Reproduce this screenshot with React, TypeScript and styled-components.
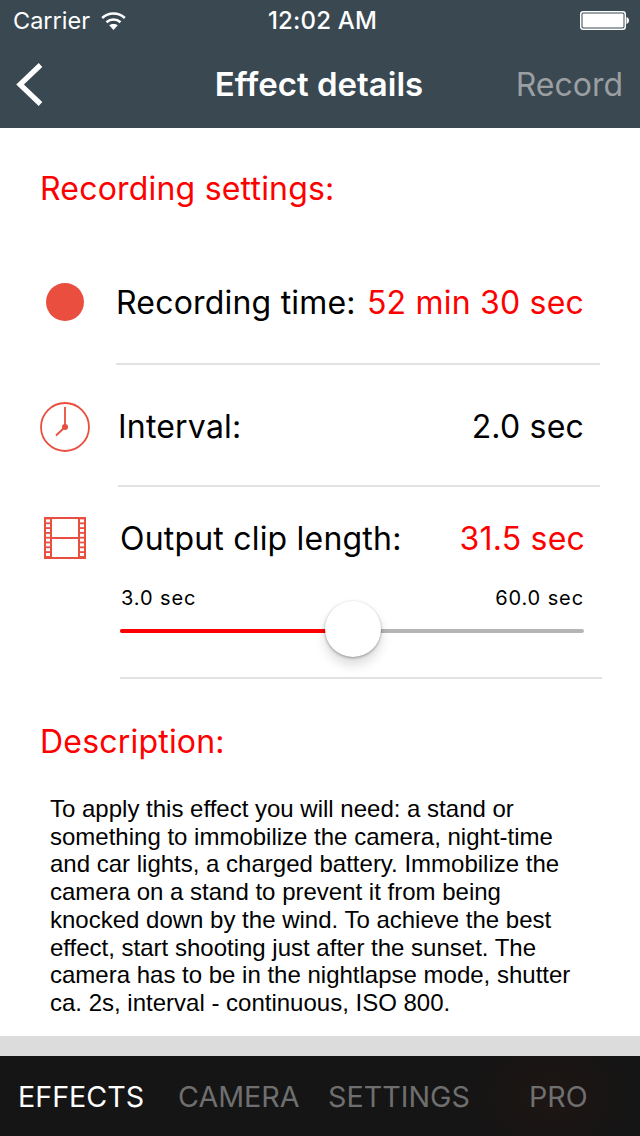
import React from 'react';
import styled, { createGlobalStyle } from 'styled-components';

const GlobalStyle = createGlobalStyle`
  html, body {
    margin: 0;
    padding: 0;
    background: #fff;
  }
`;

const Screen = styled.div`
  width: 640px;
  height: 1136px;
  display: flex;
  flex-direction: column;
  overflow: hidden;
  font-family: Inter, "Liberation Sans", sans-serif;
  color: #000;
`;

const Header = styled.header`
  height: 128px;
  flex: none;
  background: #394851;
  color: #fff;
`;

const StatusBar = styled.div`
  height: 40px;
  padding: 0 11px 0 13px;
  display: grid;
  grid-template-columns: 1fr auto 1fr;
  align-items: center;
  font-size: 23.5px;
  font-weight: 400;
`;

const StatusLeft = styled.div`
  display: flex;
  align-items: center;
  gap: 11px;
`;

const StatusTime = styled.div`
  margin-left: 3px;
  font-size: 24px;
  font-weight: 500;
  letter-spacing: 0.2px;
`;

const StatusRight = styled.div`
  display: flex;
  justify-content: flex-end;
`;

const NavBar = styled.div`
  height: 88px;
  padding: 0 17px 0 15px;
  display: grid;
  grid-template-columns: 1fr auto 1fr;
  align-items: center;
`;

const NavTitle = styled.div`
  font-size: 33px;
  font-weight: 600;
`;

const NavAction = styled.div`
  justify-self: end;
  font-size: 32px;
  font-weight: 400;
  color: #9b9fa2;
`;

const Content = styled.main`
  flex: 1;
  padding: 40px 40px 0 41px;
`;

const SectionTitle = styled.h2`
  margin: 0 0 0 -1px;
  height: 40px;
  font-size: 32px;
  line-height: 42px;
  font-weight: 400;
  letter-spacing: 0.2px;
  color: #fe0000;
`;

const Row = styled.div<{ $height: number; $inset: number; $shift?: number }>`
  height: ${(p) => p.$height}px;
  box-sizing: border-box;
  display: flex;
  align-items: flex-start;
  border-bottom: 2px solid #e2e2e2;
  margin-left: ${(p) => p.$inset}px;
  margin-right: ${(p) => p.$shift ?? 0}px;
  position: relative;
`;

const IconSlot = styled.div<{ $top: number; $size: number; $left: number }>`
  position: absolute;
  left: ${(p) => p.$left}px;
  top: ${(p) => p.$top}px;
  width: ${(p) => p.$size}px;
  height: ${(p) => p.$size}px;
`;

const RowBody = styled.div<{ $pad: number; $right: number }>`
  flex: 1;
  padding: ${(p) => p.$pad}px ${(p) => p.$right}px 0 0;
  min-width: 0;
`;

const RowLine = styled.div`
  display: flex;
  justify-content: space-between;
  height: 40px;
  font-size: 32px;
  line-height: 42px;
  letter-spacing: 0.2px;
  white-space: nowrap;
`;

const Value = styled.span<{ $accent?: boolean }>`
  margin-right: -1px;
  color: ${(p) => (p.$accent ? '#fe0000' : '#000')};
`;

const RangeLabels = styled.div`
  margin-top: 20px;
  padding-left: 1px;
  display: flex;
  justify-content: space-between;
  font-size: 20px;
  line-height: 40px;
  letter-spacing: 0.9px;
  height: 40px;
`;

const Track = styled.div`
  position: relative;
  height: 4px;
  margin-top: 11px;
  border-radius: 2px;
  background: #b5b5b5;
`;

const TrackFill = styled.div`
  height: 100%;
  border-radius: 2px 0 0 2px;
  background: #fe0000;
`;

const Thumb = styled.div`
  position: absolute;
  top: -28px;
  width: 56px;
  height: 56px;
  margin-left: -28px;
  border-radius: 50%;
  background: #fff;
  box-shadow: 0 1px 3px rgba(0, 0, 0, 0.35), 0 8px 12px rgba(0, 0, 0, 0.14);
`;

const DescriptionTitle = styled(SectionTitle)`
  margin-top: 42px;
`;

const Description = styled.p`
  margin: 34px 0 0 9px;
  width: 530px;
  font-family: "Liberation Sans", Arial, sans-serif;
  font-size: 24px;
  line-height: 27.7px;
`;

const Divider = styled.div`
  height: 20px;
  flex: none;
  background: #dcdcdc;
`;

const TabBar = styled.nav`
  height: 80px;
  flex: none;
  display: flex;
  align-items: center;
  background: radial-gradient(ellipse 90px 70px at 550px 40px, #1d1513, #151515);
  font-size: 28.7px;
`;

const Tab = styled.div<{ $active?: boolean; $width: number; $left: number }>`
  width: ${(p) => p.$width}px;
  padding-left: ${(p) => p.$left}px;
  box-sizing: border-box;
  color: ${(p) => (p.$active ? '#fff' : '#6f6f6f')};
  white-space: nowrap;
`;

const RecordDot = styled.div`
  width: 38px;
  height: 38px;
  border-radius: 50%;
  background: #e94e3f;
`;

const WifiIcon = () => (
  <svg width="25" height="19" viewBox="0 0 25 19" fill="none">
    <path d="M1.2 7C7.5 1 17.5 1 23.8 7" stroke="#fff" strokeWidth="2.6" />
    <path d="M5.5 11.2C9.5 7.6 15.5 7.6 19.5 11.2" stroke="#fff" strokeWidth="2.6" />
    <path d="M12.5 19L8.2 14.3C10.5 12.4 14.5 12.4 16.8 14.3Z" fill="#fff" />
  </svg>
);

const BatteryIcon = () => (
  <svg width="49" height="19" viewBox="0 0 49 19">
    <rect x="0.75" y="0.75" width="44.5" height="17.5" rx="2.5" fill="none" stroke="#fff" strokeWidth="1.5" />
    <rect x="2.5" y="2.5" width="41" height="14" rx="1" fill="#fff" />
    <path d="M46.5 6C48 6.3 49 7.8 49 9.5S48 12.7 46.5 13Z" fill="#fff" />
  </svg>
);

const BackIcon = () => (
  <svg width="30" height="44" viewBox="0 0 30 44" fill="none">
    <path d="M25.5 3L5 22.5L25.5 42" stroke="#fff" strokeWidth="5.2" />
  </svg>
);

const ClockIcon = () => (
  <svg width="50" height="50" viewBox="0 0 50 50" fill="none" stroke="#e94e3f">
    <circle cx="25" cy="25" r="24" strokeWidth="1.8" />
    <path d="M25 5V25L16 33.5" strokeWidth="1.8" />
    <circle cx="25" cy="25" r="3" fill="#e94e3f" stroke="none" />
  </svg>
);

const FilmIcon = () => {
  const holes = [0, 1, 2, 3, 4, 5, 6, 7];
  return (
    <svg width="42" height="42" viewBox="0 0 42 42">
      <path d="M0 0H42V42H0Z" fill="#e94e3f" />
      <rect x="8" y="2" width="26" height="18" fill="#fff" />
      <rect x="8" y="22" width="26" height="18" fill="#fff" />
      {holes.map((i) => (
        <React.Fragment key={i}>
          <rect x="2" y={2.4 + i * 4.8} width="4" height="3" fill="#fff" />
          <rect x="36" y={2.4 + i * 4.8} width="4" height="3" fill="#fff" />
        </React.Fragment>
      ))}
    </svg>
  );
};

export default function App() {
  return (
    <>
      <GlobalStyle />
      <Screen>
        <Header>
          <StatusBar>
            <StatusLeft>
              Carrier
              <WifiIcon />
            </StatusLeft>
            <StatusTime>12:02 AM</StatusTime>
            <StatusRight>
              <BatteryIcon />
            </StatusRight>
          </StatusBar>
          <NavBar>
            <BackIcon />
            <NavTitle>Effect details</NavTitle>
            <NavAction>Record</NavAction>
          </NavBar>
        </Header>

        <Content>
          <SectionTitle>Recording settings:</SectionTitle>

          <Row $height={157} $inset={75}>
            <IconSlot $left={-70} $top={75} $size={38}>
              <RecordDot />
            </IconSlot>
            <RowBody $pad={74} $right={17}>
              <RowLine>
                <span>Recording time:</span>
                <Value $accent>52 min 30 sec</Value>
              </RowLine>
            </RowBody>
          </Row>

          <Row $height={122} $inset={77}>
            <IconSlot $left={-78} $top={37} $size={50}>
              <ClockIcon />
            </IconSlot>
            <RowBody $pad={41} $right={17}>
              <RowLine>
                <span>Interval:</span>
                <Value>2.0 sec</Value>
              </RowLine>
            </RowBody>
          </Row>

          <Row $height={192} $inset={79} $shift={-2}>
            <IconSlot $left={-76} $top={30} $size={42}>
              <FilmIcon />
            </IconSlot>
            <RowBody $pad={31} $right={18}>
              <RowLine>
                <span>Output clip length:</span>
                <Value $accent>31.5 sec</Value>
              </RowLine>
              <RangeLabels>
                <span>3.0 sec</span>
                <span>60.0 sec</span>
              </RangeLabels>
              <Track>
                <TrackFill style={{ width: `${(233 / 464) * 100}%` }} />
                <Thumb style={{ left: `${(233 / 464) * 100}%` }} />
              </Track>
            </RowBody>
          </Row>

          <DescriptionTitle>Description:</DescriptionTitle>
          <Description>
            To apply this effect you will need: a stand or something to immobilize the camera,
            night-time and car lights, a charged battery. Immobilize the camera on a stand to
            prevent it from being knocked down by the wind. To achieve the best effect, start
            shooting just after the sunset. The camera has to be in the nightlapse mode, shutter
            ca. 2s, interval - continuous, ISO 800.
          </Description>
        </Content>

        <Divider />
        <TabBar>
          <Tab $active $width={160} $left={18}>EFFECTS</Tab>
          <Tab $width={150} $left={18}>CAMERA</Tab>
          <Tab $width={201} $left={18}>SETTINGS</Tab>
          <Tab $width={129} $left={18}>PRO</Tab>
        </TabBar>
      </Screen>
    </>
  );
}
